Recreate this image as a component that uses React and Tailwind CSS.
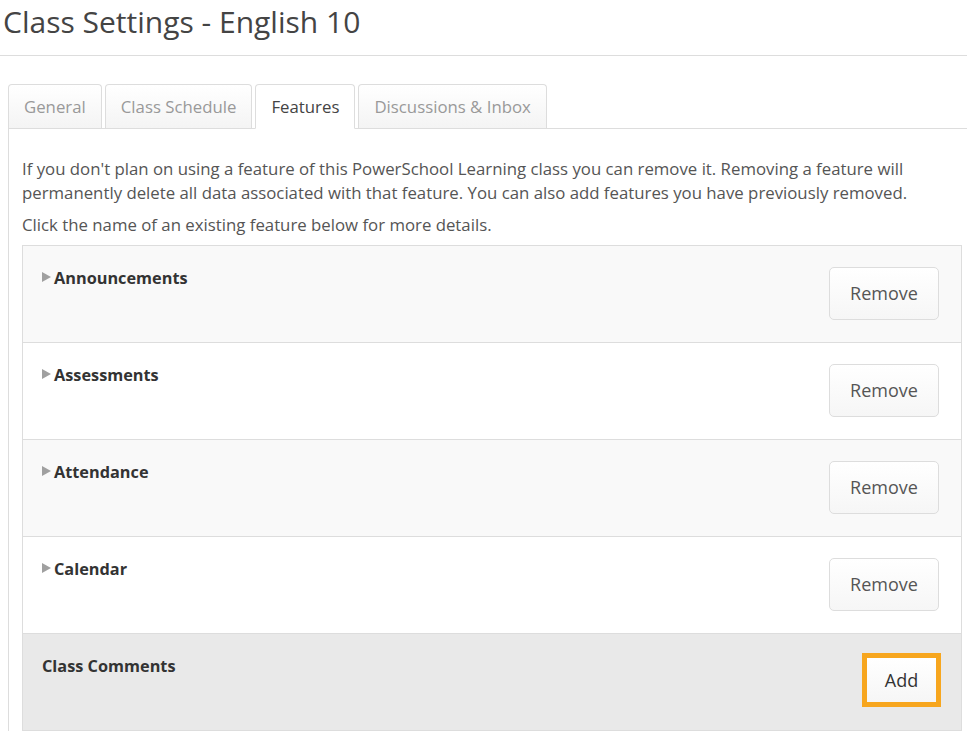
export default function App() {
  const rows = [
    { name: "Announcements", bg: "bg-[#f9f9f9]", action: "Remove" },
    { name: "Assessments", bg: "bg-white", action: "Remove" },
    { name: "Attendance", bg: "bg-[#f9f9f9]", action: "Remove" },
    { name: "Calendar", bg: "bg-white", action: "Remove" },
    { name: "Class Comments", bg: "bg-[#e9e9e9]", action: "Add" },
  ];
  const tabs = [
    { label: "General", active: false },
    { label: "Class Schedule", active: false },
    { label: "Features", active: true },
    { label: "Discussions & Inbox", active: false },
  ];
  return (
    <div className="w-[967px] h-[736px] overflow-hidden bg-white font-['Open_Sans',sans-serif] text-[#555]">
      <div className="h-[56px] border-b border-[#ddd] pl-[3px] flex items-center">
        <h1 className="text-[30px] leading-[36px] text-[#444] font-normal -mt-[11px]">Class Settings - English 10</h1>
      </div>
      <div className="pt-[28px] pl-[8px]">
        <div className="flex gap-[3px] border-b border-[#ddd] h-[45px] items-end">
          {tabs.map((t) => (
            <div
              key={t.label}
              className={
                t.active
                  ? "h-[45px] px-[15px] flex items-center bg-white border border-[#ddd] border-b-white rounded-t-[4px] text-[16.8px] text-[#444] -mb-px"
                  : "h-[44px] px-[15px] flex items-center bg-gradient-to-b from-white to-[#f4f4f4] border border-[#ddd] border-b-0 rounded-t-[4px] text-[16.8px] text-[#999]"
              }
            >
              {t.label}
            </div>
          ))}
        </div>
        <div className="border-l border-[#ddd] pl-[13px] pt-[28px] pr-[5px]">
          <p className="text-[16.8px] leading-[24px] text-[#555] pr-[30px]">
            If you don't plan on using a feature of this PowerSchool Learning class you can remove it. Removing a feature will permanently delete all data associated with that feature. You can also add features you have previously removed.
          </p>
          <p className="text-[16.8px] leading-[24px] text-[#555] mt-[8px]">
            Click the name of an existing feature below for more details.
          </p>
          <div className="mt-[8px] border border-[#ddd] border-b-0">
            {rows.map((r) => (
              <div key={r.name} className={`${r.bg} border-b border-[#ddd] h-[97px] flex justify-between pl-[19px] pr-[22px]`}>
                <div className="pt-[20px] flex items-start">
                  {r.action === "Remove" && (
                    <svg width="9" height="10" viewBox="0 0 9 10" className="mt-[6px] mr-[3px]">
                      <path d="M0 0 L9 5 L0 10 Z" fill="#a0a0a0" />
                    </svg>
                  )}
                  <span className="text-[16.3px] leading-[24px] font-bold text-[#333]">{r.name}</span>
                </div>
                {r.action === "Remove" ? (
                  <div className="pt-[21px]">
                    <button className="w-[110px] h-[53px] rounded-[5px] border border-[#ddd] bg-gradient-to-b from-white to-[#f6f6f6] text-[18px] text-[#555]">
                      Remove
                    </button>
                  </div>
                ) : (
                  <div className="pt-[19px] -mr-[2px]">
                    <button className="w-[79px] h-[54px] border-[5px] border-[#f7a61e] bg-gradient-to-b from-white to-[#f6f6f6] text-[18px] text-[#333]">
                      Add
                    </button>
                  </div>
                )}
              </div>
            ))}
          </div>
        </div>
      </div>
    </div>
  );
}
